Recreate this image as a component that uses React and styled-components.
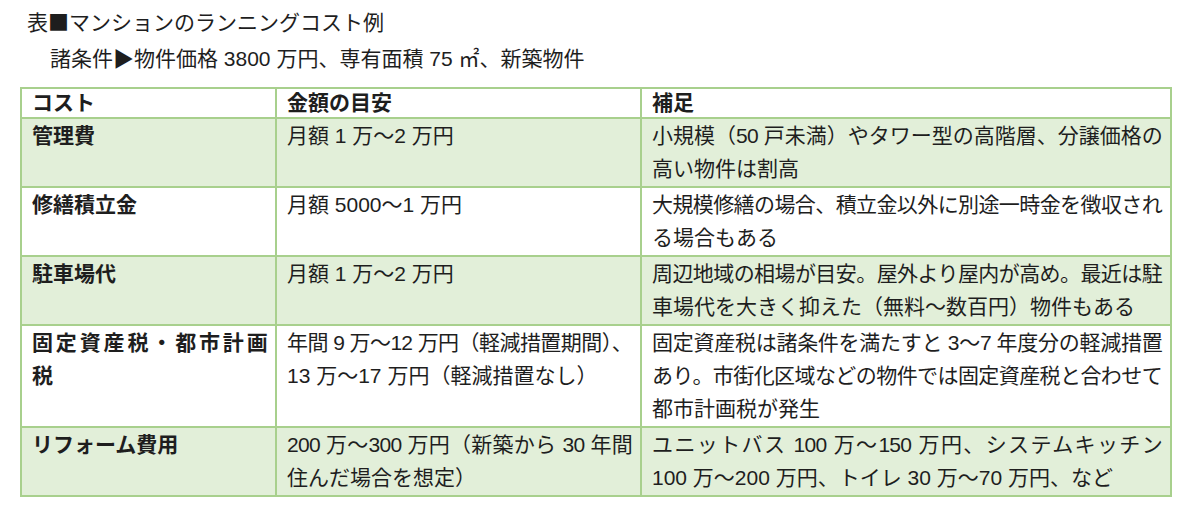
import styled, { createGlobalStyle } from "styled-components";

const GlobalStyle = createGlobalStyle`
  body {
    margin: 0;
    background: #ffffff;
    font-family: "Liberation Sans", "Noto Sans CJK JP", sans-serif;
    color: #1e1e1e;
  }
`;

const Page = styled.div`
  width: 1200px;
  height: 530px;
  padding: 4px 0 0 20px;
  box-sizing: border-box;
  overflow: hidden;
`;

const Title = styled.div`
  font-size: 21px;
  line-height: 35px;
  padding-left: 7px;
`;

const Conditions = styled.div`
  font-size: 21px;
  line-height: 35px;
  padding-left: 30px;
`;

const Glyph = styled.span`
  font-family: "Noto Sans CJK JP", sans-serif;
`;

const Table = styled.table`
  margin-top: 11px;
  width: 1150px;
  border-collapse: collapse;
  table-layout: fixed;
  font-size: 21px;
`;

const Row = styled.tr`
  background: ${(p) => (p.$band ? "#e2efd9" : "#ffffff")};
`;

const HeadCell = styled.th`
  border: 2px solid #a8d08d;
  padding: 0 8px 0 10px;
  line-height: 28px;
  text-align: left;
  font-weight: 700;
`;

const Cell = styled.td`
  border: 2px solid #a8d08d;
  padding: 0 8px 1px 10px;
  line-height: 33px;
  vertical-align: top;
  font-weight: ${(p) => (p.$bold ? 700 : 400)};
`;

// lines that fill the cell are slightly compressed, then spread to the edge
const Line = styled.div`
  white-space: nowrap;
  text-align: left;
  text-align-last: ${(p) => (p.$fill ? "justify" : "auto")};
  letter-spacing: ${(p) => (p.$fill ? "-0.7px" : "0")};
`;

const rows = [
  {
    cost: [["管理費"]],
    amount: [["月額 1 万〜2 万円"]],
    note: [["小規模（50 戸未満）やタワー型の高階層、分譲価格の", true], ["高い物件は割高"]],
  },
  {
    cost: [["修繕積立金"]],
    amount: [["月額 5000〜1 万円"]],
    note: [["大規模修繕の場合、積立金以外に別途一時金を徴収され", true], ["る場合もある"]],
  },
  {
    cost: [["駐車場代"]],
    amount: [["月額 1 万〜2 万円"]],
    note: [
      ["周辺地域の相場が目安。屋外より屋内が高め。最近は駐", true],
      ["車場代を大きく抑えた（無料〜数百円）物件もある"],
    ],
  },
  {
    cost: [["固定資産税・都市計画", true], ["税"]],
    amount: [["年間 9 万〜12 万円（軽減措置期間）、", true], ["13 万〜17 万円（軽減措置なし）"]],
    note: [
      ["固定資産税は諸条件を満たすと 3〜7 年度分の軽減措置", true],
      ["あり。市街化区域などの物件では固定資産税と合わせて", true],
      ["都市計画税が発生"],
    ],
  },
  {
    cost: [["リフォーム費用"]],
    amount: [["200 万〜300 万円（新築から 30 年間", true], ["住んだ場合を想定）"]],
    note: [
      ["ユニットバス 100 万〜150 万円、システムキッチン", true],
      ["100 万〜200 万円、トイレ 30 万〜70 万円、など"],
    ],
  },
];

const Lines = ({ lines }) =>
  lines.map(([text, fill], i) => (
    <Line key={i} $fill={fill}>
      {text}
    </Line>
  ));

export default function App() {
  return (
    <>
      <GlobalStyle />
      <Page>
        <Title>
          表<Glyph>■</Glyph>マンションのランニングコスト例
        </Title>
        <Conditions>
          諸条件<Glyph>▶</Glyph>物件価格 3800 万円、専有面積 75 ㎡、新築物件
        </Conditions>
        <Table>
          <colgroup>
            <col style={{ width: 255 }} />
            <col style={{ width: 365 }} />
            <col style={{ width: 530 }} />
          </colgroup>
          <thead>
            <Row>
              <HeadCell>コスト</HeadCell>
              <HeadCell>金額の目安</HeadCell>
              <HeadCell>補足</HeadCell>
            </Row>
          </thead>
          <tbody>
            {rows.map((r, i) => (
              <Row key={i} $band={i % 2 === 0}>
                <Cell $bold>
                  <Lines lines={r.cost} />
                </Cell>
                <Cell>
                  <Lines lines={r.amount} />
                </Cell>
                <Cell>
                  <Lines lines={r.note} />
                </Cell>
              </Row>
            ))}
          </tbody>
        </Table>
      </Page>
    </>
  );
}
